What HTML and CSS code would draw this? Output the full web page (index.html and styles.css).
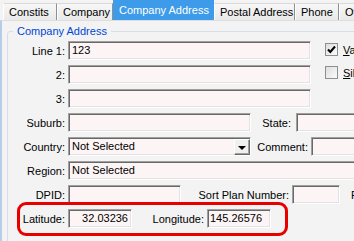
FILE: index.html
```html
<!DOCTYPE html>
<html>
<head>
<meta charset="utf-8">
<link rel="stylesheet" href="styles.css">
</head>
<body>
<div class="tabs">
  <div class="tab t-constits">Constits</div>
  <div class="tab t-company">Company</div>
  <div class="tab active t-address">Company Address</div>
  <div class="tab t-postal">Postal Address</div>
  <div class="tab t-phone">Phone</div>
  <div class="tab t-other">Other</div>
</div>
<div class="panel">
  <div class="group">
    <div class="group-title">Company Address</div>
    <div class="form">
      <div class="top">
        <div class="lines">
          <div class="row"><span class="lbl">Line 1:</span><div class="field w-line">123</div></div>
          <div class="row"><span class="lbl">2:</span><div class="field w-line"></div></div>
          <div class="row"><span class="lbl">3:</span><div class="field w-line"></div></div>
        </div>
        <div class="checks">
          <div class="check"><span class="box"><svg width="11" height="11" viewBox="0 0 11 11"><path d="M2 5.5 L4.3 8 L9 2.5" fill="none" stroke="#000" stroke-width="2"/></svg></span><span class="check-text"><u>V</u>alid</span></div>
          <div class="check"><span class="box"></span><span class="check-text"><u>S</u>ilent</span></div>
        </div>
      </div>
      <div class="row"><span class="lbl">Suburb:</span><div class="field w-suburb"></div><span class="lbl2 l-state">State:</span><div class="field grow"></div></div>
      <div class="row"><span class="lbl">Country:</span><div class="field combo w-suburb"><span>Not Selected</span><span class="drop"><span class="arrow"></span></span></div><span class="lbl2 l-comment">Comment:</span><div class="field grow"></div></div>
      <div class="row"><span class="lbl">Region:</span><div class="field grow">Not Selected</div></div>
      <div class="row"><span class="lbl">DPID:</span><div class="field w-dpid"></div><span class="lbl2 l-sort">Sort Plan Number:</span><div class="field w-sort"></div><span class="lbl3">Postcode:</span></div>
      <div class="row lat-row"><span class="lbl">Latitude:</span><div class="field w-coord num">32.03236</div><span class="lbl2 l-long">Longitude:</span><div class="field w-coord">145.26576</div><div class="highlight"></div></div>
    </div>
  </div>
</div>
</body>
</html>
```
FILE: styles.css
```css
html, body {
  margin: 0;
  width: 354px;
  height: 241px;
  overflow: hidden;
}
body {
  font-family: "Liberation Sans", Arial, sans-serif;
  font-size: 11px;
  color: #000;
  background: #f3f3f3;
}
.tabs {
  display: flex;
  align-items: flex-end;
  height: 20px;
  padding-left: 3px;
  white-space: nowrap;
}
.tab {
  flex: none;
  box-sizing: border-box;
  height: 17px;
  line-height: 16px;
  padding-left: 5px;
  overflow: hidden;
  border-top: 1px solid #d9d9d9;
  border-left: 1px solid #fff;
  border-right: 1px solid #8e8e8e;
  background: linear-gradient(#f7f7f7, #e9e9e9);
}
.tab.active {
  height: 20px;
  line-height: 20px;
  padding-left: 6px;
  border: none;
  background: #3d9be9;
  color: #fff;
}
.t-constits { width: 54px; }
.t-company { width: 56px; }
.t-address { width: 101px; }
.t-postal { width: 81px; }
.t-phone { width: 44px; }
.t-other { width: 40px; }
.panel {
  height: 221px;
  border-left: 2px solid #b5cde8;
  border-top: 1px solid #dedede;
  box-sizing: border-box;
  background: #f3f3f3;
  padding-top: 10px;
}
.group {
  margin-left: 5px;
  width: 420px;
  height: 300px;
  border: 1px solid #d5dfe5;
  border-radius: 3px;
}
.group-title {
  width: max-content;
  margin: -7px 0 0 5px;
  padding: 0 4px;
  line-height: 13px;
  color: #0046d5;
  background: #f3f3f3;
}
.form {
  margin-top: 3px;
  display: flex;
  flex-direction: column;
  gap: 5px;
}
.top {
  display: flex;
}
.lines {
  display: flex;
  flex-direction: column;
  gap: 5px;
}
.checks {
  margin-left: 14px;
  padding-top: 2px;
  display: flex;
  flex-direction: column;
  gap: 10px;
}
.check {
  display: flex;
  align-items: center;
  height: 13px;
  white-space: nowrap;
}
.box {
  box-sizing: border-box;
  width: 13px;
  height: 13px;
  border: 1px solid #8e8f8f;
  background: linear-gradient(135deg, #dedede, #fbfbfb);
  display: flex;
  align-items: center;
  justify-content: center;
}
.check-text {
  margin-left: 5px;
}
.row {
  display: flex;
  align-items: center;
  height: 19px;
  white-space: nowrap;
}
.lbl {
  flex: none;
  width: 57px;
  margin-right: 3px;
  text-align: right;
}
.lbl2 {
  flex: none;
  text-align: right;
}
.l-state { width: 40px; margin-right: 5px; }
.l-comment { width: 57px; margin-right: 3px; }
.l-sort { width: 108px; margin-right: 3px; }
.l-long { width: 72px; margin-right: 3px; }
.lbl3 { margin-left: 11px; }
.field {
  flex: none;
  box-sizing: border-box;
  height: 19px;
  line-height: 17px;
  padding: 0 3px;
  border: 1px solid;
  border-color: #a0a0a0 #fff #fff #a0a0a0;
  box-shadow: inset 1px 1px 0 #696969, inset -1px -1px 0 #e3e3e3;
  background: #fdf5f5;
  overflow: hidden;
}
.grow { flex: 1; }
.w-line { width: 243px; }
.w-suburb { width: 183px; }
.w-dpid { width: 113px; }
.w-sort { width: 48px; }
.w-coord { width: 64px; padding: 0 3px 0 2px; }
.num { text-align: right; }
.combo {
  display: flex;
  align-items: center;
  justify-content: space-between;
  padding-right: 0;
}
.drop {
  box-sizing: border-box;
  width: 16px;
  height: 16px;
  margin-top: 1px;
  border: 1px solid;
  border-color: #fff #696969 #696969 #fff;
  box-shadow: inset -1px -1px 0 #a0a0a0;
  background: #f0f0f0;
  display: flex;
  align-items: center;
  justify-content: center;
}
.arrow {
  width: 0;
  height: 0;
  border-left: 4px solid transparent;
  border-right: 4px solid transparent;
  border-top: 4px solid #000;
  margin-top: 1px;
}
.lat-row {
  position: relative;
}
.highlight {
  position: absolute;
  left: 9px;
  top: -7px;
  width: 271px;
  height: 34px;
  box-sizing: border-box;
  border: 3px solid #e80000;
  border-radius: 9px;
  pointer-events: none;
}
```
